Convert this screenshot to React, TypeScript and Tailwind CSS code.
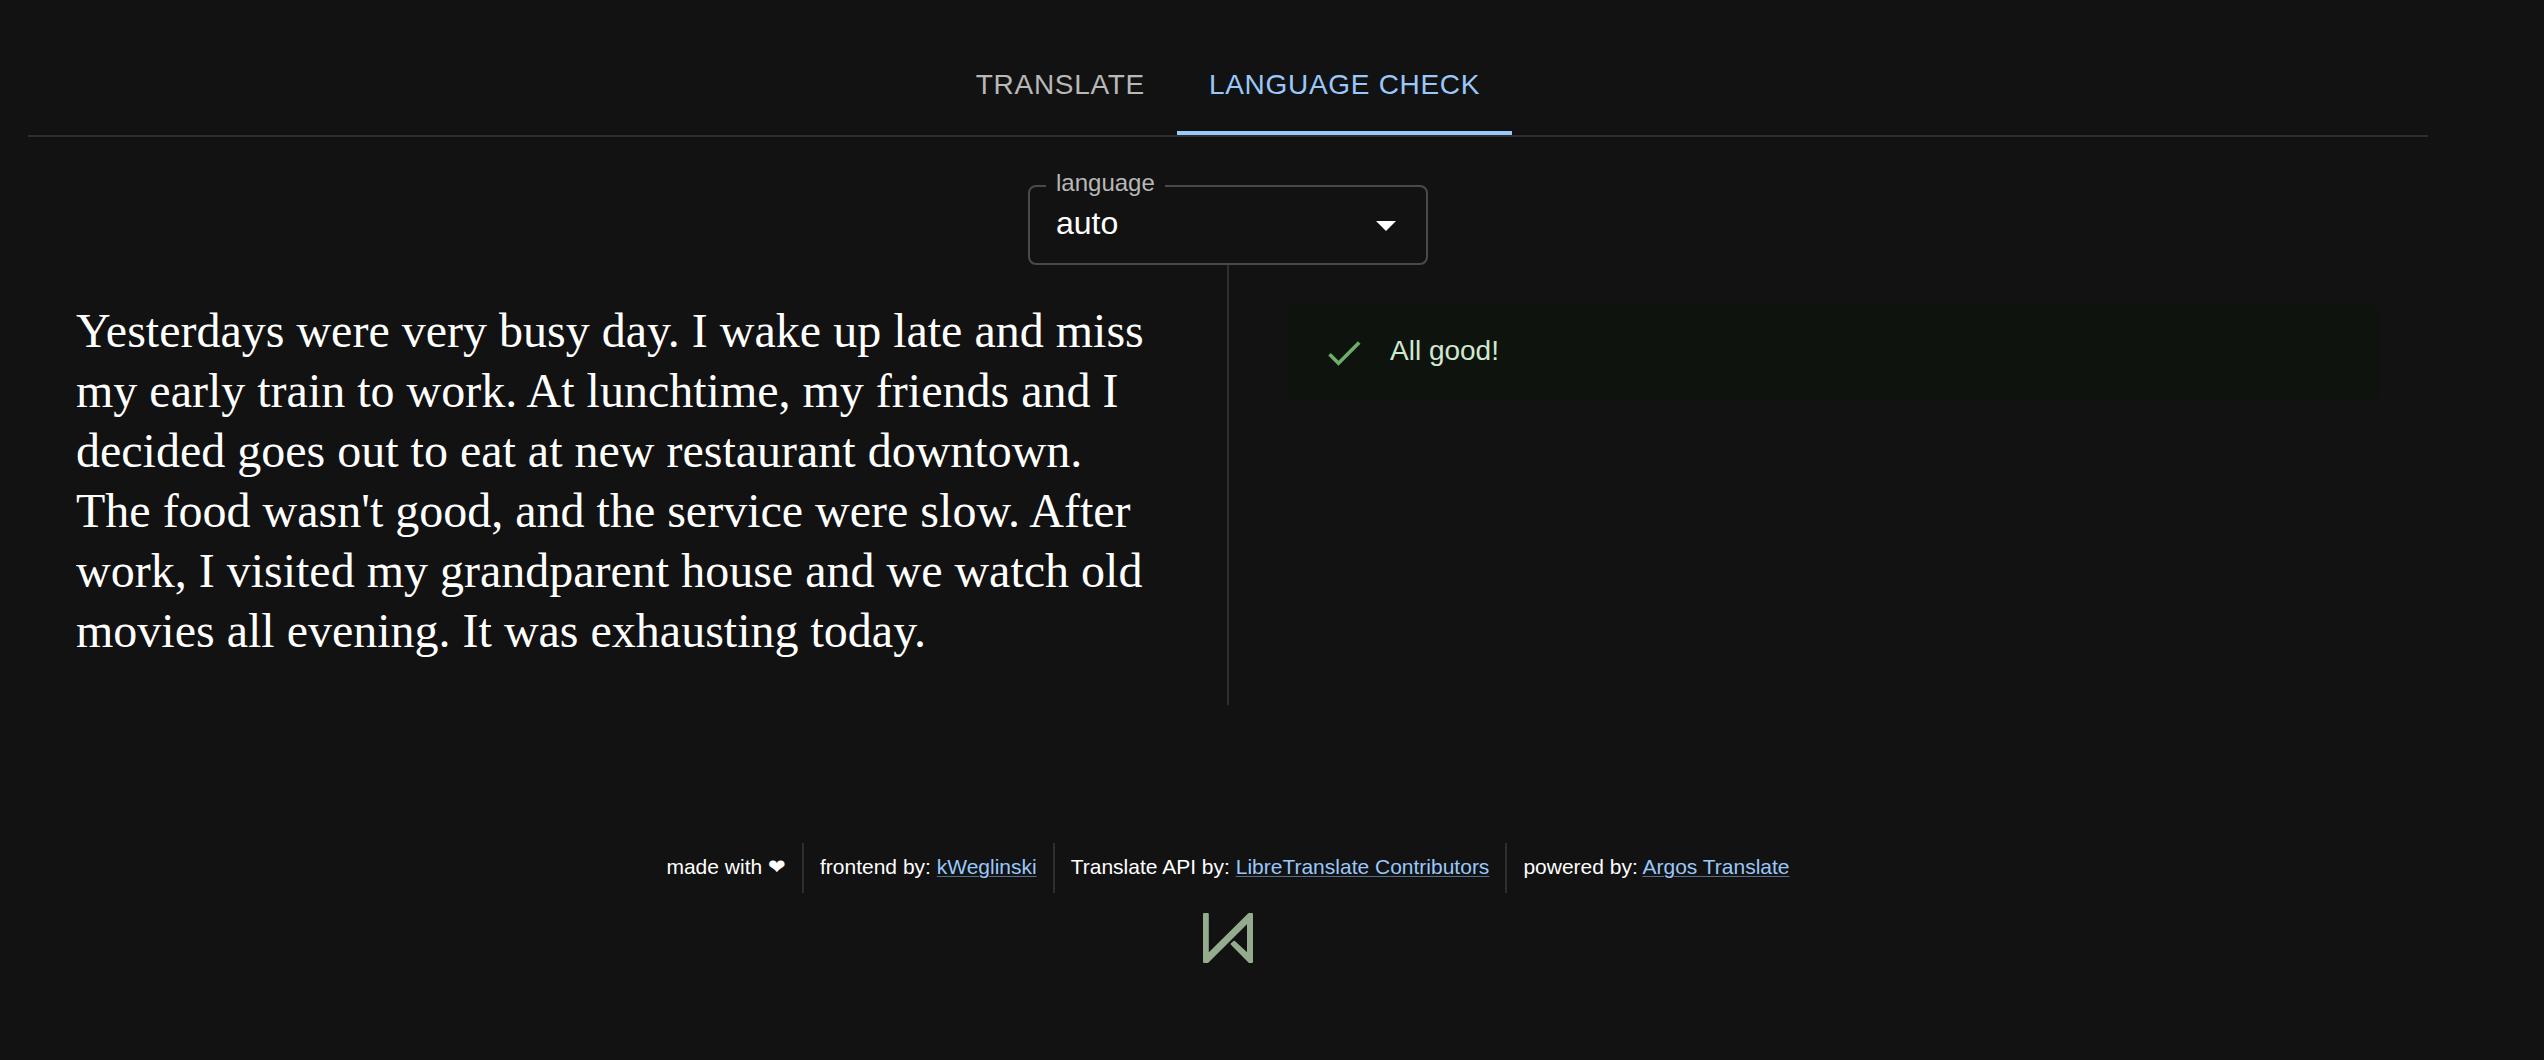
import React, { useState } from "react";

const SAMPLE = [
  "Yesterdays were very busy day. I wake up late and miss",
  "my early train to work. At lunchtime, my friends and I",
  "decided goes out to eat at new restaurant downtown.",
  "The food wasn't good, and the service were slow. After",
  "work, I visited my grandparent house and we watch old",
  "movies all evening. It was exhausting today.",
].join("\n");

const TABS = ["Translate", "Language check"];

const CREDITS = [
  { label: "made with ❤" },
  { label: "frontend by:", link: "kWeglinski" },
  { label: "Translate API by:", link: "LibreTranslate Contributors" },
  { label: "powered by:", link: "Argos Translate" },
];

function Tabs() {
  const [active, setActive] = useState(1);
  return (
    <div role="tablist" className="flex justify-center border-b-2 border-[#2e2e2e]">
      {TABS.map((tab, i) => (
        <button
          key={tab}
          role="tab"
          aria-selected={i === active}
          onClick={() => setActive(i)}
          className={
            i === active
              ? "h-24 border-b-4 border-[#99c8fa] px-8 text-[28px] leading-9 tracking-wide text-[#99c8fa] uppercase"
              : "h-24 border-b-4 border-transparent px-8 text-[28px] leading-9 tracking-wide text-[#b8b8b8] uppercase"
          }
        >
          {tab}
        </button>
      ))}
    </div>
  );
}

function LanguageSelect() {
  return (
    <div className="relative mx-auto mt-12 w-[400px]">
      <label
        htmlFor="language"
        className="absolute -top-4 left-[18px] bg-[#121212] px-2.5 text-2xl leading-7 text-[#b8b8b8]"
      >
        language
      </label>
      <select
        id="language"
        defaultValue="auto"
        className="block h-20 w-full appearance-none rounded-lg border-2 border-[#4a4a4a] bg-transparent px-[26px] pb-1 text-[32px] leading-10 text-white"
      >
        <option value="auto">auto</option>
        <option value="en">English</option>
        <option value="pl">Polish</option>
      </select>
      <svg
        viewBox="0 0 24 24"
        aria-hidden="true"
        className="pointer-events-none absolute top-4 right-[18px] size-12 fill-white"
      >
        <path d="M7 10l5 5 5-5z" />
      </svg>
    </div>
  );
}

function Logo() {
  return (
    <svg viewBox="0 0 50 50" role="img" aria-label="kWeglinski" className="size-[50px]">
      <g fill="#94ab8d" stroke="#94ab8d" strokeWidth="2" strokeLinejoin="round">
        <path d="M1 1H4.8V41.8L46 1H49V49H46.4L28.6 31L31.2 28.8L45 41.6V8.8L4.6 49H1Z" />
      </g>
    </svg>
  );
}

export default function App() {
  return (
    <div className="min-h-screen bg-[#121212] pt-[39px] pr-[116px] pb-12 pl-7 font-['Liberation_Sans',Arial,sans-serif] text-white">
      <Tabs />
      <LanguageSelect />
      <main className="grid grid-cols-[1fr_2px_1fr]">
        <section className="pt-9 pr-6 pb-11 pl-12">
          <textarea
            aria-label="Text to check"
            defaultValue={SAMPLE}
            rows={6}
            className="block w-full resize-none overflow-hidden bg-transparent font-['Liberation_Serif',serif] text-5xl leading-[60px] outline-none"
          />
        </section>
        <div className="bg-[#2e2e2e]" />
        <section className="pt-10 pr-12 pl-[61px]">
          <div role="alert" className="flex h-24 items-center gap-6 rounded-lg bg-[#0e130d] px-8 text-[28px] text-[#cfe8cf]">
            <svg viewBox="0 0 24 24" aria-hidden="true" className="size-11 fill-[#6eae68]">
              <path d="M9 16.17 4.83 12l-1.42 1.41L9 19 21 7l-1.41-1.41z" />
            </svg>
            <p className="pb-1 leading-9">All good!</p>
          </div>
        </section>
      </main>
      <footer className="mt-[138px] flex flex-col items-center gap-5">
        <ul className="flex divide-x-2 divide-[#2e2e2e] text-[21px] leading-[48px]">
          {CREDITS.map((c) => (
            <li key={c.label} className="px-4 pb-0.5">
              {c.label}
              {c.link && (
                <>
                  {" "}
                  <a href="#" className="text-[#99c8fa] underline decoration-[#99c8fa]/50 decoration-1 underline-offset-2">
                    {c.link}
                  </a>
                </>
              )}
            </li>
          ))}
        </ul>
        <Logo />
      </footer>
    </div>
  );
}
